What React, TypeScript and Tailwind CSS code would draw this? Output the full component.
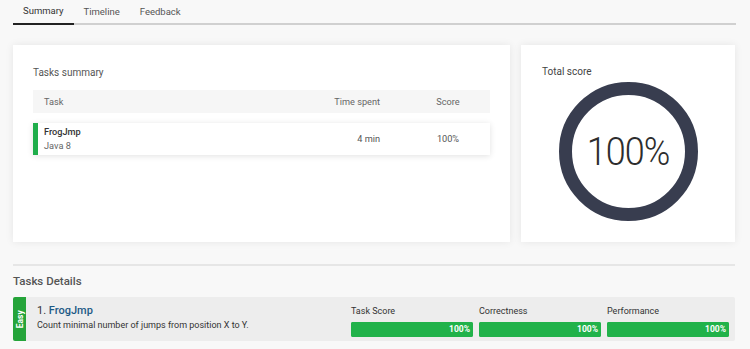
import React from "react";

const tabs = ["Summary", "Timeline", "Feedback"];

const scores = [
  { label: "Task Score", value: 100 },
  { label: "Correctness", value: 100 },
  { label: "Performance", value: 100 },
];

function ScoreRing({ value }: { value: number }) {
  return (
    <div className="relative w-[139px] h-[139px]">
      <svg width="139" height="139" viewBox="0 0 139 139">
        <circle cx="69.5" cy="69.5" r="63" fill="none" stroke="#383d4f" strokeWidth="13" />
      </svg>
      <div className="absolute inset-0 flex items-center justify-center text-[36px] font-light text-[#2d2d2d] tracking-[-1px] scale-y-110">
        {value}%
      </div>
    </div>
  );
}

export default function App() {
  return (
    <div
      className="w-[750px] h-[349px] bg-[#f8f8f8] px-[13px] overflow-hidden"
      style={{ fontFamily: "Roboto, 'Liberation Sans', sans-serif" }}
    >
      {/* tabs */}
      <div className="flex border-b-2 border-[#d0d0d0] w-[723px] h-[25px]">
        {tabs.map((t, i) => (
          <div
            key={t}
            className={
              i === 0
                ? "px-[10px] h-[25px] flex items-center text-[9.5px] text-[#333] border-b-2 border-[#222] -mb-[2px]"
                : "px-[10px] h-[25px] flex items-center text-[9.5px] text-[#555]"
            }
          >
            {t}
          </div>
        ))}
      </div>

      {/* summary cards */}
      <div className="flex gap-[11px] mt-[20px] w-[722px]">
        <div className="w-[497px] h-[197px] bg-white shadow-[0_0_8px_rgba(0,0,0,0.08)] px-[20px] pt-[20px]">
          <div className="text-[10px] text-[#555] leading-[16px]">Tasks summary</div>
          <div className="mt-[9px] h-[23px] bg-[#f6f6f6] flex items-center text-[9.2px] text-[#666]">
            <div className="flex-1 pl-[11px]">Task</div>
            <div className="w-[100px] text-right">Time spent</div>
            <div className="w-[38px]" />
            <div className="w-[60px] text-center">Score</div>
            <div className="w-[12px]" />
          </div>
          <div className="mt-[10px] h-[32px] bg-white shadow-[0_1px_6px_rgba(0,0,0,0.12)] flex items-center text-[9.2px] text-[#555]">
            <div className="w-[5px] h-full bg-[#1fae4b]" />
            <div className="flex-1 pl-[6px] flex flex-col leading-[14px]">
              <span className="font-medium text-[#333]">FrogJmp</span>
              <span className="text-[#666]">Java 8</span>
            </div>
            <div className="w-[100px] text-right">4 min</div>
            <div className="w-[38px]" />
            <div className="w-[60px] text-center">100%</div>
            <div className="w-[12px]" />
          </div>
        </div>

        <div className="w-[214px] h-[197px] bg-white shadow-[0_0_8px_rgba(0,0,0,0.08)] pt-[20px] flex flex-col">
          <div className="pl-[21px] text-[10px] text-[#444] leading-[14px]">Total score</div>
          <div className="flex justify-center mt-[3px]">
            <ScoreRing value={100} />
          </div>
        </div>
      </div>

      {/* details */}
      <div className="mt-[22px] border-t-2 border-[#e6e6e6] w-[722px]" />
      <div className="mt-[6px] text-[11.5px] font-medium text-[#555] leading-[18px]">Tasks Details</div>
      <div className="mt-[7px] w-[722px] h-[44px] bg-[#ededed] rounded-[2px] flex">
        <div className="w-[13px] h-full bg-[#25a43a] rounded-l-[2px] flex items-center justify-center">
          <span className="-rotate-90 text-[8.5px] font-bold text-white leading-none">Easy</span>
        </div>
        <div className="flex-1 pl-[11px] pt-[6px]">
          <div className="text-[11px] leading-[16px] text-[#333]">
            1. <span className="font-medium text-[#1d5a86]">FrogJmp</span>
          </div>
          <div className="text-[9px] leading-[13px] text-[#333]">
            Count minimal number of jumps from position X to Y.
          </div>
        </div>
        <div className="flex gap-[6px] pr-[6px] pt-[8px]">
          {scores.map((s) => (
            <div key={s.label} className="w-[122px]">
              <div className="text-[9px] leading-[13px] text-[#333]">{s.label}</div>
              <div className="mt-[4px] h-[15px] rounded-[2px] bg-[#21b24a] relative">
                <div
                  className="h-full rounded-[2px] bg-[#21b24a] flex items-center justify-end pr-[3px]"
                  style={{ width: `${s.value}%` }}
                >
                  <span className="text-[8.5px] font-bold text-white">{s.value}%</span>
                </div>
              </div>
            </div>
          ))}
        </div>
      </div>
    </div>
  );
}
